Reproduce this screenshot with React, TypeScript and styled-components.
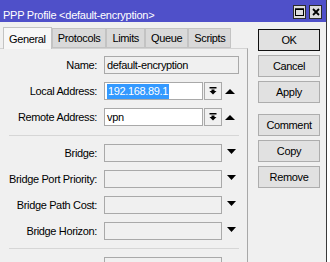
import React from "react";
import styled, { createGlobalStyle } from "styled-components";

const GlobalStyle = createGlobalStyle`
  html, body {
    margin: 0;
    padding: 0;
    background: #ffffff;
  }
  body {
    font-family: "Liberation Sans", Arial, sans-serif;
    font-size: 11px;
    letter-spacing: -0.35px;
    color: #000;
  }
`;

const Screen = styled.div`
  display: flex;
  width: 330px;
  height: 262px;
  overflow: hidden;
`;

const Window = styled.div`
  display: flex;
  flex-direction: column;
  width: 326px;
  flex-shrink: 0;
  background: #f0f0f0;
  border-right: 1px solid #3a3a3a;
`;

const Outside = styled.div`
  flex: 1;
  background: #ffffff;
`;

const TitleBar = styled.div`
  display: flex;
  align-items: center;
  height: 22px;
  padding: 2px 4px 0 3px;
  box-sizing: border-box;
  background: #4f50c9;
  color: #ffffff;
  flex-shrink: 0;
`;

const TitleText = styled.div`
  flex: 1;
  padding-top: 6px;
  line-height: 13px;
  letter-spacing: -0.25px;
  white-space: nowrap;
`;

const TitleButtons = styled.div`
  display: flex;
  gap: 3px;
`;

const TitleButton = styled.div`
  display: flex;
  align-items: center;
  justify-content: center;
  width: 13px;
  height: 14px;
  box-sizing: border-box;
  background: #dcdcdc;
  border: 1px solid #2c2c2c;
`;

const Body = styled.div`
  display: flex;
  flex: 1;
`;

const LeftColumn = styled.div`
  display: flex;
  flex-direction: column;
  width: 248px;
  flex-shrink: 0;
`;

const TabStrip = styled.div`
  display: flex;
  align-items: flex-end;
  height: 22px;
  margin-top: 4px;
  padding-left: 3px;
`;

const Tab = styled.div<{ $active?: boolean }>`
  display: flex;
  align-items: center;
  height: ${(p) => (p.$active ? "22px" : "20px")};
  padding: 0 5px;
  box-sizing: border-box;
  border: 1px solid #c3c3c3;
  border-bottom: ${(p) => (p.$active ? "none" : "1px solid #c3c3c3")};
  background: ${(p) => (p.$active ? "#f7f7f7" : "#d9d9d9")};
  margin-bottom: ${(p) => (p.$active ? "-1px" : "0")};
  position: relative;
  z-index: ${(p) => (p.$active ? 1 : 0)};
  white-space: nowrap;
`;

const Panel = styled.div`
  display: flex;
  flex-direction: column;
  flex: 1;
  padding-top: 7px;
  border-top: 1px solid #d3d3d3;
  border-right: 1px solid #a8a8a8;
`;

const Section = styled.div`
  display: flex;
  flex-direction: column;
  gap: 8px;
`;

const Row = styled.div`
  display: flex;
  align-items: center;
  height: 18px;
`;

const Label = styled.div`
  width: 97px;
  margin-right: 7px;
  text-align: right;
  white-space: nowrap;
`;

const Field = styled.div<{ $w: number; $bg?: string }>`
  display: flex;
  align-items: center;
  width: ${(p) => p.$w}px;
  height: 18px;
  padding-left: 2px;
  box-sizing: border-box;
  background: ${(p) => p.$bg ?? "#f0f0f0"};
  border: 1px solid #a9a9a9;
  white-space: nowrap;
  overflow: hidden;
`;

const Selected = styled.span`
  display: inline-block;
  line-height: 15px;
  padding: 0 1px;
  background: #3399ff;
  color: #ffffff;
`;

const DropButton = styled.div`
  display: flex;
  align-items: center;
  justify-content: center;
  width: 18px;
  height: 18px;
  margin-left: 1px;
  box-sizing: border-box;
  background: #f0f0f0;
  border: 1px solid #a9a9a9;
`;

const Arrow = styled.svg<{ $lift?: number; $left?: number }>`
  margin-left: ${(p) => p.$left ?? 4}px;
  margin-bottom: ${(p) => p.$lift ?? 0}px;
`;

const Separator = styled.div<{ $top: number }>`
  height: 1px;
  width: 230px;
  margin: ${(p) => p.$top}px 0 8px 9px;
  background: #d6d6d6;
`;

const RightColumn = styled.div`
  display: flex;
  flex-direction: column;
  gap: 4px;
  padding-top: 7px;
  margin-left: 10px;
`;

const Button = styled.div<{ $default?: boolean; $space?: number }>`
  display: flex;
  align-items: center;
  justify-content: center;
  width: 62px;
  height: 22px;
  box-sizing: border-box;
  background: #e1e1e1;
  border: 1px solid ${(p) => (p.$default ? "#111111" : "#adadad")};
  margin-top: ${(p) => p.$space ?? 0}px;
`;

const UpArrow = () => (
  <Arrow width="10" height="5" viewBox="0 0 10 5" $left={3}>
    <polygon points="0,5 10,5 5,0" fill="#000" />
  </Arrow>
);

const DownArrow = () => (
  <Arrow width="9" height="5" viewBox="0 0 9 5" $lift={3} $left={5}>
    <polygon points="0,0 9,0 4.5,5" fill="#000" />
  </Arrow>
);

const DropIcon = () => (
  <svg width="8" height="8" viewBox="0 0 8 8">
    <rect x="0.5" y="0" width="7" height="1.5" fill="#000" />
    <rect x="2.5" y="2.5" width="3" height="2" fill="#000" />
    <polygon points="0.5,4 7.5,4 4,7.5" fill="#000" />
  </svg>
);

const ComboRow = ({ label, children }: { label: string; children: React.ReactNode }) => (
  <Row>
    <Label>{label}</Label>
    <Field $w={99} $bg="#ffffff">
      {children}
    </Field>
    <DropButton>
      <DropIcon />
    </DropButton>
    <UpArrow />
  </Row>
);

const BridgeRow = ({ label }: { label: string }) => (
  <Row>
    <Label>{label}</Label>
    <Field $w={118} />
    <DownArrow />
  </Row>
);

const tabs = ["General", "Protocols", "Limits", "Queue", "Scripts"];

export default function App() {
  return (
    <>
      <GlobalStyle />
      <Screen>
        <Window>
          <TitleBar>
            <TitleText>PPP Profile &lt;default-encryption&gt;</TitleText>
            <TitleButtons>
              <TitleButton>
                <svg width="9" height="8" viewBox="0 0 9 8">
                  <rect x="0.5" y="1" width="8" height="6.5" fill="none" stroke="#000" />
                  <rect x="0" y="0.5" width="9" height="1.5" fill="#000" />
                </svg>
              </TitleButton>
              <TitleButton>
                <svg width="8" height="8" viewBox="0 0 8 8">
                  <path d="M1 1 L7 7 M7 1 L1 7" stroke="#000" strokeWidth="1.8" />
                </svg>
              </TitleButton>
            </TitleButtons>
          </TitleBar>
          <Body>
            <LeftColumn>
              <TabStrip>
                {tabs.map((t, i) => (
                  <Tab key={t} $active={i === 0}>
                    {t}
                  </Tab>
                ))}
              </TabStrip>
              <Panel>
                <Section>
                  <Row>
                    <Label>Name:</Label>
                    <Field $w={135}>default-encryption</Field>
                  </Row>
                  <ComboRow label="Local Address:">
                    <Selected>192.168.89.1</Selected>
                  </ComboRow>
                  <ComboRow label="Remote Address:">vpn</ComboRow>
                </Section>
                <Separator $top={9} />
                <Section>
                  <BridgeRow label="Bridge:" />
                  <BridgeRow label="Bridge Port Priority:" />
                  <BridgeRow label="Bridge Path Cost:" />
                  <BridgeRow label="Bridge Horizon:" />
                </Section>
                <Separator $top={8} />
                <Section>
                  <Row>
                    <Label />
                    <Field $w={118} />
                  </Row>
                </Section>
              </Panel>
            </LeftColumn>
            <RightColumn>
              <Button $default>OK</Button>
              <Button>Cancel</Button>
              <Button>Apply</Button>
              <Button $space={7}>Comment</Button>
              <Button>Copy</Button>
              <Button>Remove</Button>
            </RightColumn>
          </Body>
        </Window>
        <Outside />
      </Screen>
    </>
  );
}
